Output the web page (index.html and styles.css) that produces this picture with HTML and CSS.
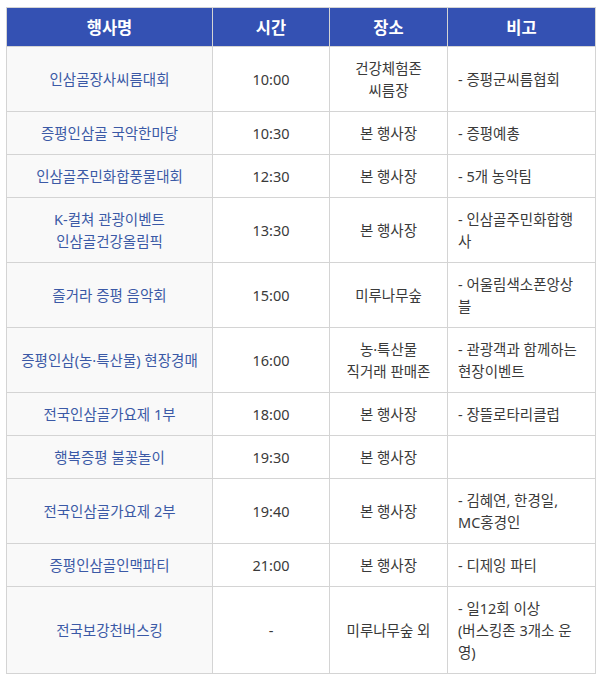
FILE: index.html
```html
<!DOCTYPE html>
<html lang="ko">
<head>
<meta charset="utf-8">
<title>행사 일정</title>
<link rel="stylesheet" href="styles.css">
</head>
<body>
<table class="schedule">
  <colgroup>
    <col class="c-name">
    <col class="c-time">
    <col class="c-place">
    <col class="c-note">
  </colgroup>
  <thead>
    <tr><th>행사명</th><th>시간</th><th>장소</th><th>비고</th></tr>
  </thead>
  <tbody>
    <tr><td class="name">인삼골장사씨름대회</td><td>10:00</td><td>건강체험존<br>씨름장</td><td class="note">- 증평군씨름협회</td></tr>
    <tr><td class="name">증평인삼골 국악한마당</td><td>10:30</td><td>본 행사장</td><td class="note">- 증평예총</td></tr>
    <tr><td class="name">인삼골주민화합풍물대회</td><td>12:30</td><td>본 행사장</td><td class="note">- 5개 농악팀</td></tr>
    <tr><td class="name">K-컬쳐 관광이벤트<br>인삼골건강올림픽</td><td>13:30</td><td>본 행사장</td><td class="note">- 인삼골주민화합행사</td></tr>
    <tr><td class="name">즐거라 증평 음악회</td><td>15:00</td><td>미루나무숲</td><td class="note">- 어울림색소폰앙상블</td></tr>
    <tr><td class="name">증평인삼(농·특산물) 현장경매</td><td>16:00</td><td>농·특산물<br>직거래 판매존</td><td class="note">- 관광객과 함께하는 현장이벤트</td></tr>
    <tr><td class="name">전국인삼골가요제 1부</td><td>18:00</td><td>본 행사장</td><td class="note">- 장뜰로타리클럽</td></tr>
    <tr><td class="name">행복증평 불꽃놀이</td><td>19:30</td><td>본 행사장</td><td class="note"></td></tr>
    <tr><td class="name">전국인삼골가요제 2부</td><td>19:40</td><td>본 행사장</td><td class="note">- 김혜연, 한경일,<br>MC홍경인</td></tr>
    <tr><td class="name">증평인삼골인맥파티</td><td>21:00</td><td>본 행사장</td><td class="note">- 디제잉 파티</td></tr>
    <tr><td class="name">전국보강천버스킹</td><td>-</td><td>미루나무숲 외</td><td class="note">- 일12회 이상<br>(버스킹존 3개소 운영)</td></tr>
  </tbody>
</table>
</body>
</html>
```
FILE: styles.css
```css
html, body {
  margin: 0;
  background: #ffffff;
}
body {
  padding: 7px 6px;
  font-family: "Noto Sans", "Noto Sans CJK KR", sans-serif;
  font-size: 14.5px;
  color: #3a3a3a;
}
.schedule {
  border-collapse: collapse;
  table-layout: fixed;
  width: 589px;
  border: 1px solid #d4d4d4;
}
.c-name { width: 206px; }
.c-time { width: 117px; }
.c-place { width: 118px; }
.c-note { width: 148px; }
.schedule th {
  background: #3451b3;
  color: #ffffff;
  font-family: "Noto Sans CJK KR", sans-serif;
  font-size: 16.5px;
  font-weight: 700;
  line-height: 22px;
  padding: 8px 10px;
  border: 1px solid #d4d4d4;
  text-align: center;
}
.schedule td {
  line-height: 22px;
  padding: 10px 10px;
  border: 1px solid #d4d4d4;
  text-align: center;
  vertical-align: middle;
}
.schedule td.name {
  background: #f9f9f9;
  color: #3b59a6;
}
.schedule td.note {
  text-align: left;
  padding-right: 16px;
}
```
